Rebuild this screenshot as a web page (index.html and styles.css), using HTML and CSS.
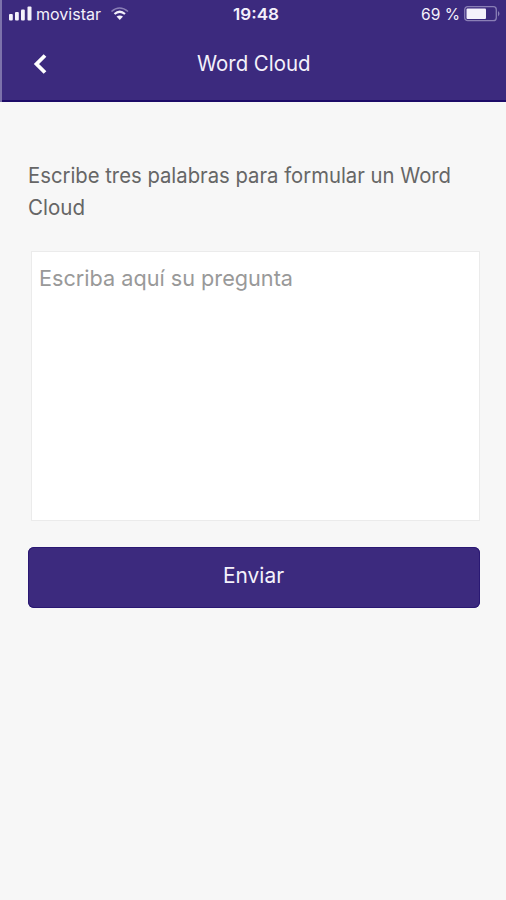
FILE: index.html
```html
<!DOCTYPE html>
<html lang="es">
<head>
<meta charset="utf-8">
<title>Word Cloud</title>
<link rel="stylesheet" href="styles.css">
</head>
<body>
<header class="top">
  <div class="status">
    <div class="carrier">
      <svg class="signal" width="24" height="14" viewBox="0 0 24 14"><rect x="0" y="7" width="3.800" height="6.500" rx="1"/><rect x="6" y="5" width="3.800" height="8.500" rx="1"/><rect x="12" y="2.500" width="3.800" height="11" rx="1"/><rect x="18.500" y="-.5" width="4" height="14" rx="1"/></svg>
      <svg class="text carrier-name" width="68" height="22"><text x="0" y="16" textLength="65" lengthAdjust="spacingAndGlyphs">movistar</text></svg>
      <svg class="wifi" width="18" height="14" viewBox="0 0 18 14"><path class="faint" d="M.5 4.500Q8.500 -2.500 17 4.500"/><path d="M3.500 7Q8.700 2.500 14 7"/><path class="dot" d="M5.500 9.500Q8.700 7.500 12 9.500L8.800 13Z"/></svg>
    </div>
    <svg class="text time" width="47" height="22"><text x="0" y="16" textLength="46" lengthAdjust="spacingAndGlyphs">19:48</text></svg>
    <div class="power">
      <svg class="text percent" width="42" height="22"><text x="0" y="16" textLength="39" lengthAdjust="spacingAndGlyphs">69 %</text></svg>
      <svg class="battery" width="36" height="16" viewBox="0 0 36 16"><rect class="case" x=".7" y=".7" width="31.600" height="14" rx="3"/><rect x="2.500" y="2.500" width="19.500" height="10.500" rx="1"/><path class="nub" d="M34 5Q37 7.700 34 10.500Z"/></svg>
    </div>
  </div>
  <nav class="nav">
    <svg class="back" width="14" height="22" viewBox="0 0 14 22"><path d="M12 2.500L3.500 11L12 19.500"/></svg>
    <svg class="text title" width="116" height="30"><text x="0" y="21" textLength="113.500" lengthAdjust="spacingAndGlyphs">Word Cloud</text></svg>
  </nav>
</header>
<main class="content">
  <svg class="text prompt" width="450" height="66"><text x="0" y="21" textLength="423" lengthAdjust="spacingAndGlyphs">Escribe tres palabras para formular un Word</text><text x="0" y="53" textLength="57" lengthAdjust="spacingAndGlyphs">Cloud</text></svg>
  <div class="field"><svg class="text" width="260" height="34"><text x="0" y="24" textLength="254" lengthAdjust="spacingAndGlyphs">Escriba aquí su pregunta</text></svg></div>
  <div class="send"><svg class="text" width="62" height="30"><text x="0" y="21" textLength="61" lengthAdjust="spacingAndGlyphs">Enviar</text></svg></div>
</main>
</body>
</html>
```
FILE: styles.css
```css
* { box-sizing: border-box; }
body { margin: 0; min-height: 900px; background: #f7f7f7; font-family: Inter, "Liberation Sans", sans-serif; }
svg { display: block; flex: none; overflow: visible; }
.top { height: 102px; background: #3c2a7e; color: #f4f1fb; box-shadow: inset 2px 0 #7d72ab, inset 0 -2px #1d0b68; }
.top svg { fill: currentColor; }
.status { height: 28px; display: grid; grid-template-columns: 233px 1fr auto; padding: 4px 6px 0 0; font-size: 16px; }
.carrier { display: flex; padding-left: 9px; }
.signal { margin-top: 3px; }
.carrier-name { margin-left: 3px; }
.wifi { margin: 3px 0 0 7px; }
.wifi path { fill: none; stroke: currentColor; stroke-width: 2.2; }
.wifi .faint { stroke: #8a7fb6; stroke-width: 1.6; }
.wifi .dot { fill: currentColor; stroke: none; }
.time { font-weight: 600; }
.power { display: flex; }
.battery { margin: 2px 0 0 1px; }
.battery .case { fill: none; stroke: #8a7fb6; stroke-width: 1.3; }
.battery .nub { fill: #8a7fb6; }
.nav { display: grid; grid-template-columns: 197px 1fr; padding-top: 20px; font-size: 21px; }
.back { margin: 5px 0 0 33px; }
.back path { fill: none; stroke: #fff; stroke-width: 3.8; }
.title { margin-top: 2px; }
.content { padding: 60px 26px 0 28px; }
.prompt { font-size: 21px; fill: #666; }
.field { height: 270px; margin: 23px 0 0 3px; border: 1px solid #ebebeb; background: #fff; padding: 10px 7px; font-size: 22px; fill: #999; }
.send { height: 61px; margin-top: 26px; border-radius: 6px; background: #3c2a7e; box-shadow: inset 0 0 0 1px #2a1873; display: flex; justify-content: center; padding-top: 15px; font-size: 21px; fill: #f4f1fb; }
```
